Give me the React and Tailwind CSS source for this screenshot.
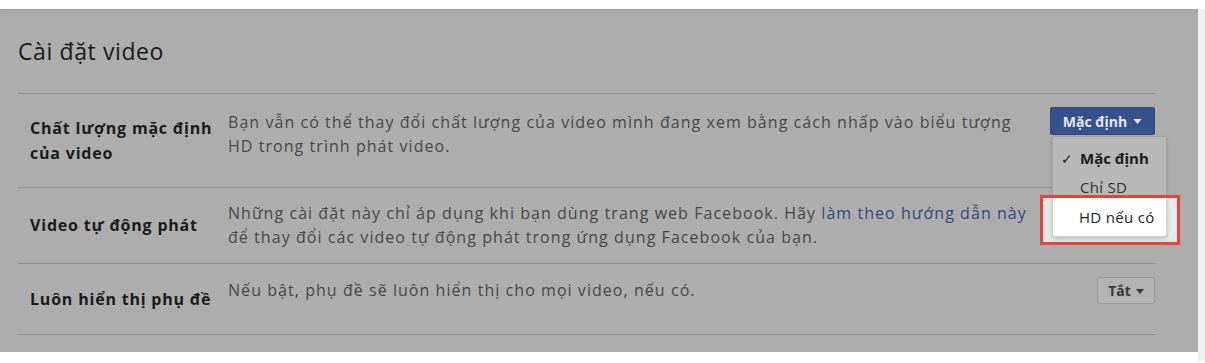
const rows = [
  {
    label: ['Chất lượng mặc định', 'của video'],
    desc: [
      'Bạn vẫn có thể thay đổi chất lượng của video mình đang xem bằng cách nhấp vào biểu tượng',
      'HD trong trình phát video.',
    ],
    h: 'h-[94px]',
    pt: 'pt-[16px]',
    control: 'quality',
  },
  {
    label: ['Video tự động phát'],
    desc: null,
    h: 'h-[76px]',
    pt: 'pt-[13px]',
    control: null,
  },
  {
    label: ['Luôn hiển thị phụ đề'],
    desc: ['Nếu bật, phụ đề sẽ luôn hiển thị cho mọi video, nếu có.'],
    h: 'h-[71px]',
    pt: 'pt-[14px]',
    control: 'captions',
  },
];

const Caret = ({ className }) => (
  <svg viewBox="0 0 10 6" className={className} fill="currentColor">
    <path d="M0 0h10L5 6z" />
  </svg>
);

const Control = ({ type }) => {
  if (type === 'quality') {
    return (
      <button className="h-[28px] w-[105px] rounded-[2px] bg-[#36518c] border border-[#2f4880] text-[#e4e7ee] text-[14px] font-bold flex items-center justify-center gap-[6px]">
        Mặc định
        <Caret className="w-[9px] h-[5px] mt-[1px]" />
      </button>
    );
  }
  if (type === 'captions') {
    return (
      <button className="h-[27px] w-[58px] rounded-[2px] bg-[#b3b3b3] border border-[#999999] text-[#3a3a3a] text-[14px] font-bold flex items-center justify-center gap-[5px]">
        Tắt
        <Caret className="w-[8px] h-[5px] mt-[1px]" />
      </button>
    );
  }
  return null;
};

export default function App() {
  return (
    <div className="relative w-[1205px] h-[363px] bg-white flex overflow-hidden font-['Open_Sans',sans-serif]">
      <div className="w-[1198px] h-[343px] mt-[9px] bg-[#adadad] shadow-[inset_0_5px_5px_-3px_rgba(0,0,0,0.08)] pl-[18px] pr-[43px]">
        {/* Heading */}
        <div className="pt-[27px] pb-[27px] border-b border-[#8e8e8e]">
          <h2 className="text-[23px] leading-[30px] text-[#1a1a1a] tracking-[0.6px]">Cài đặt video</h2>
        </div>

        {rows.map((row, i) => (
          <div key={i} className={`flex ${row.h} border-b border-[#8e8e8e]`}>
            <div className="w-[210px] shrink-0 pl-[12px] flex flex-col justify-center text-[16px] leading-[25px] font-bold tracking-[0.8px] text-[#1b1b1b]">
              {row.label.map((l) => (
                <span key={l} className="whitespace-nowrap">{l}</span>
              ))}
            </div>
            <div className={`flex-1 ${row.pt} text-[16px] leading-[24px] tracking-[1.05px] text-[#484848]`}>
              {row.desc ? (
                row.desc.map((d) => (
                  <p key={d} className="whitespace-nowrap">{d}</p>
                ))
              ) : (
                <>
                  <p className="whitespace-nowrap">
                    Những cài đặt này chỉ áp dụng khi bạn dùng trang web Facebook. Hãy{' '}
                    <span className="text-[#34487a]">làm theo hướng dẫn này</span>
                  </p>
                  <p className="whitespace-nowrap">để thay đổi các video tự động phát trong ứng dụng Facebook của bạn.</p>
                </>
              )}
            </div>
            <div className="w-[115px] shrink-0 pt-[13px] flex justify-end items-start">
              <Control type={row.control} />
            </div>
          </div>
        ))}
      </div>
      <div className="w-[7px] h-[352px] mt-[9px] bg-[#efefef]" />

      {/* Open quality menu */}
      <div className="absolute left-[1052px] top-[136px] w-[115px] h-[101px] rounded-[3px] bg-[#b8b8b8] border border-[#a2a2a2] shadow-[0_2px_4px_rgba(0,0,0,0.12)] pt-[7px] text-[15px]">
        <div className="h-[29px] flex items-center">
          <span className="w-[27px] pl-[8px] text-[#262626] text-[14px]">✓</span>
          <span className="font-bold text-[#1c1c1c]">Mặc định</span>
        </div>
        <div className="h-[29px] flex items-center pl-[27px] text-[#333333] tracking-[0.3px]">Chỉ SD</div>
      </div>

      {/* Highlighted option */}
      <div className="absolute left-[1040px] top-[195px] w-[140px] h-[50px] border-[3px] border-[#e8433d] bg-[#e9e9e9]">
        <div className="ml-[9px] w-[115px] h-[39px] bg-white rounded-b-[3px] border-x border-b border-[#d0d0d0] shadow-[0_2px_4px_rgba(0,0,0,0.18)] flex items-center pl-[26px] text-[15px] tracking-[0.3px] text-[#1d2129]">
          HD nếu có
        </div>
      </div>
    </div>
  );
}
